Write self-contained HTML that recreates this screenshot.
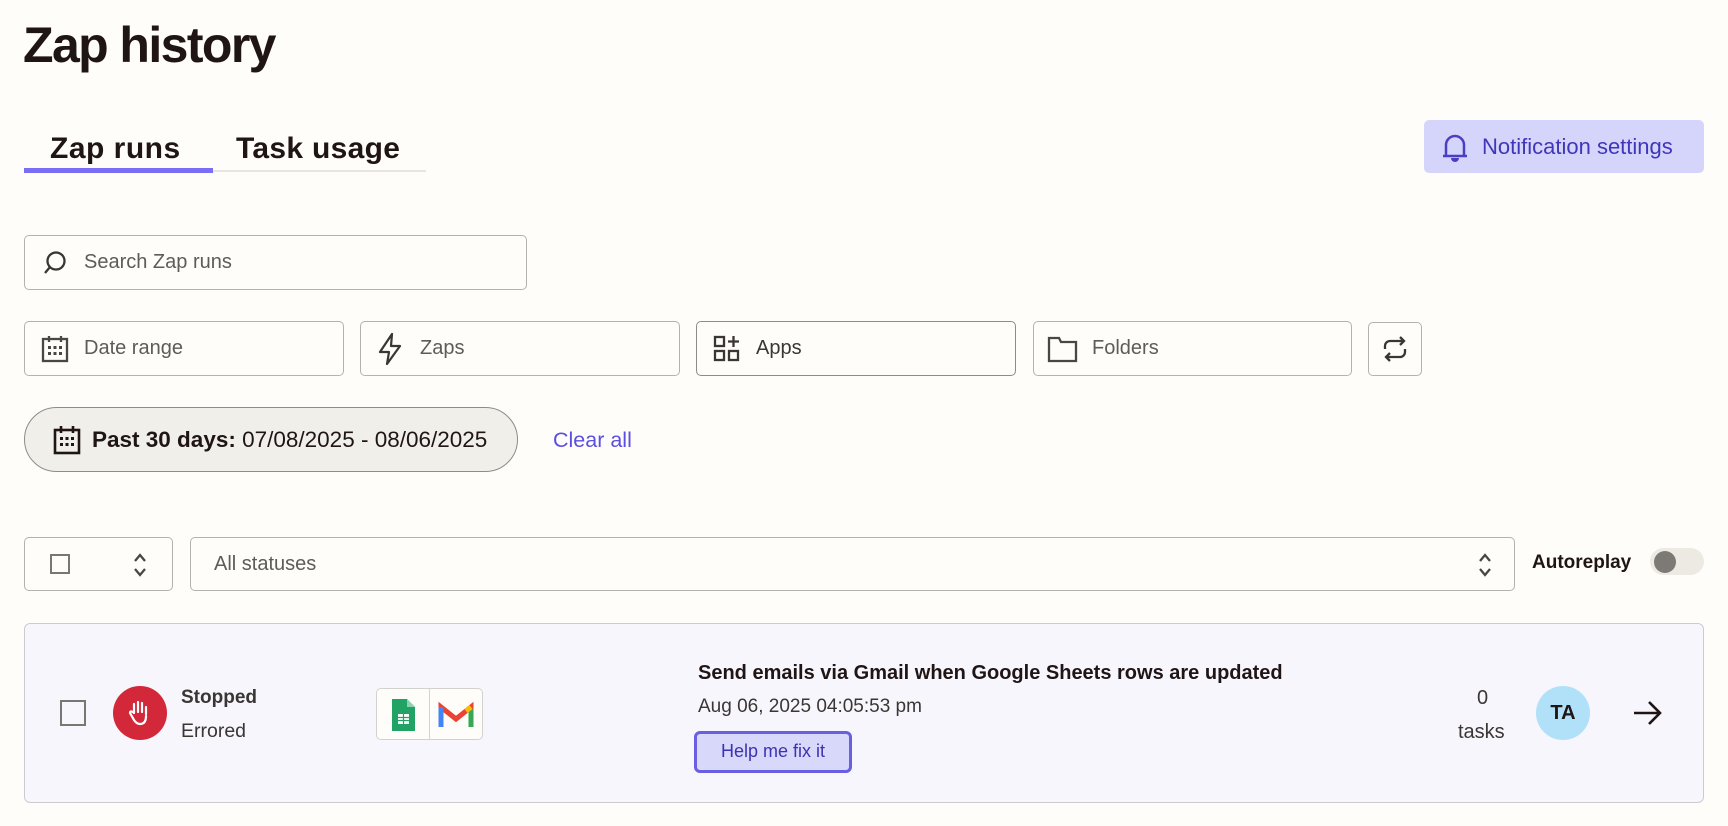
<!DOCTYPE html>
<html><head><meta charset="utf-8"><style>
*{box-sizing:border-box;margin:0;padding:0}
body{width:1728px;height:826px;background:#fffdf9;font-family:"Liberation Sans",sans-serif;color:#201515;position:relative;overflow:hidden}
.a{position:absolute}
.box{position:absolute;border:1px solid #b5b2ad;border-radius:5px;background:#fffdf9}
.ph{position:absolute;font-size:20px;color:#5f5b57}
svg{position:absolute}
</style></head><body>
<div class="a" style="left:23px;top:16px;font-size:50px;font-weight:700;letter-spacing:-1.6px;color:#201515">Zap history</div>

<div class="a" style="left:50px;top:132px;font-size:30px;font-weight:700;letter-spacing:0.5px">Zap runs</div>
<div class="a" style="left:236px;top:132px;font-size:30px;font-weight:700;letter-spacing:0.3px">Task usage</div>
<div class="a" style="left:24px;top:170px;width:402px;height:2px;background:#e7e5e0"></div>
<div class="a" style="left:24px;top:168px;width:189px;height:5px;background:#7a6ef5"></div>

<div class="a" style="left:1424px;top:120px;width:280px;height:53px;background:#d5d5fb;border-radius:5px"></div>
<svg style="left:1440px;top:132px" width="30" height="32" viewBox="0 0 30 32"><path d="M6 24V13a9 9 0 0 1 18 0v11M3 24h24" fill="none" stroke="#4a3fc2" stroke-width="2.5"/><path d="M11 26a4 4 0 0 0 8 0z" fill="#4a3fc2"/></svg>
<div class="a" style="left:1482px;top:134px;font-size:22px;color:#4136b8">Notification settings</div>

<div class="box" style="left:24px;top:235px;width:503px;height:55px"></div>
<svg style="left:40px;top:248px" width="30" height="30" viewBox="0 0 30 30"><circle cx="16" cy="13" r="8.5" fill="none" stroke="#3a3633" stroke-width="2.3"/><path d="M10 19l-5 6" stroke="#3a3633" stroke-width="2.3"/></svg>
<div class="ph" style="left:84px;top:251px">Search Zap runs</div>

<div class="box" style="left:24px;top:321px;width:320px;height:55px"></div>
<svg style="left:40px;top:334px" width="30" height="30" viewBox="0 0 30 30"><rect x="3" y="5" width="24" height="22" fill="none" stroke="#4a4643" stroke-width="2.3"/><path d="M9 2v6M21 2v6" stroke="#4a4643" stroke-width="2.3"/><g fill="#4a4643"><rect x="8" y="12" width="3" height="3"/><rect x="13.5" y="12" width="3" height="3"/><rect x="19" y="12" width="3" height="3"/><rect x="8" y="18" width="3" height="3"/><rect x="13.5" y="18" width="3" height="3"/><rect x="19" y="18" width="3" height="3"/></g></svg>
<div class="ph" style="left:84px;top:337px">Date range</div>

<div class="box" style="left:360px;top:321px;width:320px;height:55px"></div>
<svg style="left:376px;top:332px" width="28" height="34" viewBox="0 0 28 34"><path d="M16 2L4 20h9l-2 12L24 14h-9z" fill="none" stroke="#3a3633" stroke-width="2.2" stroke-linejoin="round"/></svg>
<div class="ph" style="left:420px;top:337px">Zaps</div>

<div class="box" style="left:696px;top:321px;width:320px;height:55px;border-color:#8f8c88"></div>
<svg style="left:712px;top:334px" width="30" height="30" viewBox="0 0 30 30"><g fill="none" stroke="#3a3633" stroke-width="2.3"><rect x="3" y="3" width="9" height="9"/><rect x="3" y="17" width="9" height="9"/><rect x="17" y="17" width="9" height="9"/><path d="M21.5 2v11M16 7.5h11"/></g></svg>
<div class="ph" style="left:756px;top:337px;color:#3a3633">Apps</div>

<div class="box" style="left:1033px;top:321px;width:319px;height:55px"></div>
<svg style="left:1046px;top:334px" width="34" height="30" viewBox="0 0 34 30"><path d="M3 27V4h10l2 4h15v19z" fill="none" stroke="#4a4643" stroke-width="2.3"/></svg>
<div class="ph" style="left:1092px;top:337px">Folders</div>

<div class="box" style="left:1368px;top:322px;width:54px;height:54px"></div>
<svg style="left:1380px;top:334px" width="30" height="30" viewBox="0 0 30 30"><g fill="none" stroke="#3a3633" stroke-width="2.3"><path d="M5 15v-3a5 5 0 0 1 5-5h14M20 3l4 4-4 4"/><path d="M25 15v3a5 5 0 0 1-5 5H6M10 19l-4 4 4 4"/></g></svg>

<div class="a" style="left:24px;top:407px;width:494px;height:65px;border:1px solid #8f8c88;border-radius:33px;background:#f1efe9"></div>
<svg style="left:52px;top:424px" width="30" height="32" viewBox="0 0 30 32"><rect x="3" y="6" width="24" height="23" fill="none" stroke="#201515" stroke-width="2.6"/><path d="M9 2v7M21 2v7" stroke="#201515" stroke-width="2.6"/><g fill="#201515"><rect x="8" y="13" width="3" height="3"/><rect x="13.5" y="13" width="3" height="3"/><rect x="19" y="13" width="3" height="3"/><rect x="8" y="19" width="3" height="3"/><rect x="13.5" y="19" width="3" height="3"/><rect x="19" y="19" width="3" height="3"/></g></svg>
<div class="a" style="left:92px;top:427px;font-size:22.5px;color:#201515"><b>Past 30 days:</b> 07/08/2025 - 08/06/2025</div>
<div class="a" style="left:553px;top:428px;font-size:21.5px;color:#5b4fe0">Clear all</div>

<div class="box" style="left:24px;top:537px;width:149px;height:54px"></div>
<div class="a" style="left:50px;top:554px;width:20px;height:20px;border:2px solid #7a7672"></div>
<svg style="left:132px;top:551px" width="16" height="28" viewBox="0 0 16 28"><path d="M3 10l5-6 5 6M3 18l5 6 5-6" fill="none" stroke="#4a4643" stroke-width="2.3"/></svg>
<div class="box" style="left:190px;top:537px;width:1325px;height:54px"></div>
<div class="ph" style="left:214px;top:553px">All statuses</div>
<svg style="left:1477px;top:551px" width="16" height="28" viewBox="0 0 16 28"><path d="M3 10l5-6 5 6M3 18l5 6 5-6" fill="none" stroke="#4a4643" stroke-width="2.3"/></svg>
<div class="a" style="left:1532px;top:552px;font-size:19px;font-weight:700">Autoreplay</div>
<div class="a" style="left:1650px;top:548px;width:54px;height:27px;border-radius:14px;background:#eceae3"></div>
<div class="a" style="left:1654px;top:551px;width:22px;height:22px;border-radius:50%;background:#7d7a76"></div>

<div class="a" style="left:24px;top:623px;width:1680px;height:180px;background:#f7f6fd;border:1px solid #cdcbd0;border-radius:6px"></div>
<div class="a" style="left:60px;top:700px;width:26px;height:26px;border:2px solid #7a7672"></div>
<div class="a" style="left:113px;top:686px;width:54px;height:54px;border-radius:50%;background:#d3273a"></div>
<svg style="left:125px;top:698px" width="30" height="30" viewBox="0 0 30 30"><path d="M9 15V6M13 14V4M17 14V5M21 16V9M9 15c-2-2-4-2-4 0l4 7c2 3 4 4 6 4 5 0 6-4 6-8" fill="none" stroke="#fff" stroke-width="2.2" stroke-linecap="round"/></svg>
<div class="a" style="left:181px;top:687px;font-size:19px;font-weight:700;color:#3a3633">Stopped</div>
<div class="a" style="left:181px;top:720px;font-size:19.5px;color:#3a3633">Errored</div>

<div class="a" style="left:376px;top:688px;width:107px;height:52px;border:1px solid #d4d2cf;border-radius:5px;background:#fffdf9"></div>
<div class="a" style="left:429px;top:688px;width:1px;height:52px;background:#d4d2cf"></div>
<svg style="left:388px;top:697px" width="30" height="36" viewBox="0 0 30 36"><path d="M4 2h15l8 8v24H4z" fill="#21a366"/><path d="M19 2v8h8z" fill="#8ed1b1"/><rect x="10" y="17" width="11" height="10" fill="#fff"/><path d="M15.5 17v10M10 20.5h11M10 23.5h11" stroke="#21a366" stroke-width="1.2"/></svg>
<svg style="left:438px;top:701px" width="36" height="28" viewBox="0 0 36 28"><path d="M3 26V6l15 12L33 6v20" fill="none" stroke="#ea4335" stroke-width="5"/><path d="M3 26V6" stroke="#4285f4" stroke-width="5"/><path d="M33 26V8" stroke="#34a853" stroke-width="5"/><path d="M28 10l5-4" stroke="#fbbc04" stroke-width="5"/></svg>

<div class="a" style="left:698px;top:662px;font-size:20px;font-weight:700;color:#201515">Send emails via Gmail when Google Sheets rows are updated</div>
<div class="a" style="left:698px;top:696px;font-size:19px;color:#3a3633">Aug 06, 2025 04:05:53 pm</div>
<div class="a" style="left:694px;top:731px;width:158px;height:42px;border:3px solid #6a5fe0;border-radius:6px;background:#d8d8fb"></div>
<div class="a" style="left:694px;top:741px;width:158px;text-align:center;font-size:18px;color:#3d32b0">Help me fix it</div>

<div class="a" style="left:1477px;top:687px;font-size:20px;color:#3a3633">0</div>
<div class="a" style="left:1458px;top:721px;font-size:20px;color:#3a3633">tasks</div>
<div class="a" style="left:1536px;top:686px;width:54px;height:54px;border-radius:50%;background:#b0e1f9;text-align:center;line-height:54px;font-size:20px;font-weight:700;color:#201515">TA</div>
<svg style="left:1632px;top:698px" width="32" height="30" viewBox="0 0 32 30"><path d="M2 15h26M17 4l11 11-11 11" fill="none" stroke="#201515" stroke-width="2.6"/></svg>
</body></html>
